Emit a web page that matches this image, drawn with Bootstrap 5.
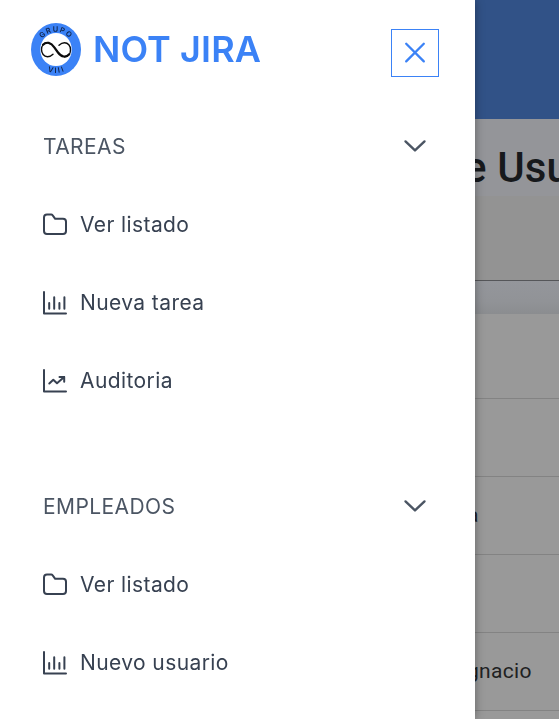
<!DOCTYPE html>
<html lang="es">
<head>
<meta charset="utf-8">
<meta name="viewport" content="width=device-width, initial-scale=1">
<title>NOT JIRA</title>
<link href="https://cdn.jsdelivr.net/npm/bootstrap@5.3.0/dist/css/bootstrap.min.css" rel="stylesheet">
<style>
body{font-family:Inter,sans-serif;background:#999;height:719px;overflow:hidden}
.page-bg{height:719px;font-family:Roboto,sans-serif;color:#17191c;white-space:nowrap;overflow:hidden}
.page-bg>div{padding-left:464px}
.top-bar{height:119px;background:#315287}
.page-title{height:77px;background:#949599;font-size:42px;font-weight:500;line-height:97px;letter-spacing:.1px}
.filter-box{height:85px;background:#939393;border-bottom:1px solid #555659}
.space-band{height:33px;background:linear-gradient(#94969b,#919397 60%,#8b8d90)}
.page-bg>.data-row{height:78px;padding-left:467px;border-bottom:1px solid #838383;font-size:21px;line-height:77px;letter-spacing:.3px;color:#202122}
.page-bg>.data-row.first-row{height:85px}
.drawer.offcanvas{--bs-offcanvas-width:475px;border:0;background:#fff;visibility:visible;box-shadow:0 0 9px rgba(0,0,0,.35);color:#3c465a}
.drawer-head{height:108px;padding:23px 36px 0 31px}
.brand{font-size:36px;font-weight:600;color:#3b82f6;line-height:53px;margin-left:12px;letter-spacing:.1px}
.close-btn{width:48px;height:48px;margin-top:6px;border:1px solid #3b82f6;border-radius:0}
.menu-row{height:78px;padding:0 48px 0 43px;font-size:21px;font-weight:440;letter-spacing:.4px;color:#374151;text-decoration:none}
.menu-label{margin-left:13px}
.menu-head{color:#4b5563;letter-spacing:.42px}
.menu-group+.menu-group{margin-top:48px}
.menu-row svg{flex:none;margin-bottom:1px;fill:none;stroke:currentColor;stroke-width:2;stroke-linecap:round;stroke-linejoin:round}
.menu-head svg{margin-bottom:2px}
</style>
<script src="https://cdn.jsdelivr.net/npm/bootstrap@5.3.0/dist/js/bootstrap.bundle.min.js"></script>
</head>
<body>
<svg class="d-none">
<symbol id="i-folder" viewBox="0 0 24 24"><path d="M4 1.5H8.2Q9 1.5 9.5 2.2L12.2 5.8H20Q23 5.8 23 8.8V18Q23 21 20 21H4Q1 21 1 18V4.5Q1 1.5 4 1.5Z"/></symbol>
<symbol id="i-bars" viewBox="0 0 24 24"><path d="M1 1V22.5H23M6.2 12V17.8M11.2 6.2V17.8M16.4 12V17.8M21.4 6.2V17.8"/></symbol>
<symbol id="i-line" viewBox="0 0 24 24"><path d="M1 1V22.5H23M6.3 14.5L10.3 10.7L14 14.2L21.2 8M16.5 8H21.2V12.8"/></symbol>
<symbol id="i-down" viewBox="0 0 24 24"><path stroke-width="2.4" d="M2.5 7.4L12 16.4L21.5 7.4"/></symbol>
</svg>

<main class="page-bg">
  <div class="top-bar"></div>
  <div class="page-title">e Usuarios</div>
  <div class="filter-box"></div>
  <div class="space-band"></div>
  <div class="data-row first-row"></div>
  <div class="data-row"></div>
  <div class="data-row">a</div>
  <div class="data-row"></div>
  <div class="data-row">gnacio</div>
  <div class="data-row"></div>
</main>

<aside class="offcanvas offcanvas-start show drawer overflow-hidden" tabindex="-1" data-bs-backdrop="false">
  <div class="drawer-head d-flex align-items-start flex-shrink-0">
    <svg width="50" height="53" viewBox="0 0 50 53">
      <defs><path id="arc-top" d="M7.9 26.5A17.1 17.8 0 0 1 42.1 26.5"/><path id="arc-bottom" d="M2 26.5A23 23.4 0 0 0 48 26.5"/></defs>
      <ellipse cx="25" cy="26.5" rx="25" ry="26.5" fill="#3b82f6"/>
      <ellipse cx="25" cy="26.5" rx="15.7" ry="16.6" fill="#fff"/>
      <g font-family="Inter,sans-serif" font-size="7.4" font-weight="600" fill="#102347" text-anchor="middle">
        <text letter-spacing="1.1"><textPath href="#arc-top" startOffset="50%">GRUPO</textPath></text>
        <text letter-spacing="1.9"><textPath href="#arc-bottom" startOffset="51%">VIII</textPath></text>
      </g>
      <g fill="none" stroke="#0b0b0b" stroke-linecap="round">
        <path stroke-width="1.4" d="M22 31.2C20 33.2 18.3 33.7 16.5 33.7C12.8 33.7 10.5 30.2 10.5 26.6C10.5 22.5 13 19.8 16.5 19.8"/>
        <path stroke-width="1.4" d="M28 22.3C30 20.4 31.7 19.8 33.5 19.8C37 19.8 39.5 22.8 39.5 26.7C39.5 30.8 37 33.7 33.5 33.7"/>
        <path stroke-width="2.2" d="M12 21.8C15.5 18.2 20 19.5 23.3 24.3L27 29.5C30.5 34.3 35 34.8 38.2 31.2"/>
      </g>
    </svg>
    <span class="brand">NOT JIRA</span>
    <button type="button" class="btn close-btn ms-auto p-0 d-flex align-items-center justify-content-center" data-bs-dismiss="offcanvas" aria-label="Cerrar">
      <svg width="22" height="22" viewBox="0 0 22 22" fill="none" stroke="#3b82f6" stroke-width="2.3" stroke-linecap="round"><path d="M2.2 1.8L19.8 19.4M19.8 1.8L2.2 19.4"/></svg>
    </button>
  </div>
  <nav>
    <section class="menu-group">
      <div class="menu-row menu-head d-flex align-items-center justify-content-between"><span>TAREAS</span><svg width="24" height="24"><use href="#i-down"/></svg></div>
      <a href="#" class="menu-row d-flex align-items-center"><svg width="24" height="24"><use href="#i-folder"/></svg><span class="menu-label">Ver listado</span></a>
      <a href="#" class="menu-row d-flex align-items-center"><svg width="24" height="24"><use href="#i-bars"/></svg><span class="menu-label">Nueva tarea</span></a>
      <a href="#" class="menu-row d-flex align-items-center"><svg width="24" height="24"><use href="#i-line"/></svg><span class="menu-label">Auditoria</span></a>
    </section>
    <section class="menu-group">
      <div class="menu-row menu-head d-flex align-items-center justify-content-between"><span>EMPLEADOS</span><svg width="24" height="24"><use href="#i-down"/></svg></div>
      <a href="#" class="menu-row d-flex align-items-center"><svg width="24" height="24"><use href="#i-folder"/></svg><span class="menu-label">Ver listado</span></a>
      <a href="#" class="menu-row d-flex align-items-center"><svg width="24" height="24"><use href="#i-bars"/></svg><span class="menu-label">Nuevo usuario</span></a>
    </section>
  </nav>
</aside>
</body>
</html>
